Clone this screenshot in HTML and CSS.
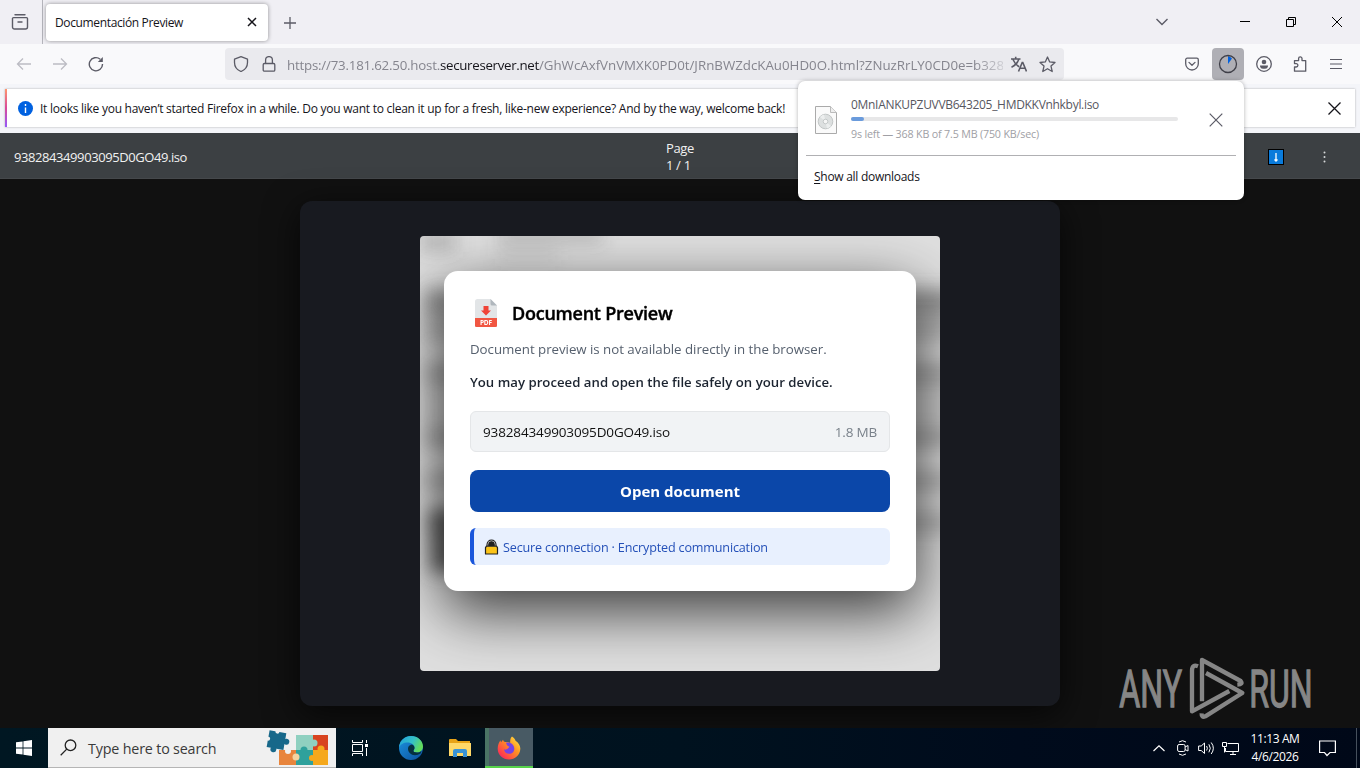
FILE: index.html
```html
<!DOCTYPE html>
<html lang="en">
  <head>
    <meta charset="utf-8">
    <title>Documentación Preview</title>
    <link rel="stylesheet" href="styles.css">
  </head>

  <body>
    <!-- tabs -->
    <div class="tabbar">
      <div class="recent">
        <svg width="18" height="18" viewBox="0 0 18 18" fill="none" stroke="#5b5b66" stroke-width="1.4"><path d="M4 1.8h10M2.5 4.6h13a1 1 0 0 1 1 1v8.4a2 2 0 0 1-2 2h-11a2 2 0 0 1-2-2V5.6a1 1 0 0 1 1-1zM7 9h4" stroke-linecap="round"/></svg>
      </div>
      <div class="tab">
        <span class="tab-title">Documentación Preview</span>
        <svg width="10" height="10" viewBox="0 0 10 10" stroke="#15141a" stroke-width="1.5"><path d="M1 1l8 8M9 1l-8 8"/></svg>
      </div>
      <svg class="plus" width="12" height="12" viewBox="0 0 12 12" stroke="#5b5b66" stroke-width="1.3"><path d="M6 0v12M0 6h12"/></svg>
      <div class="window-btns">
        <svg width="14" height="8" viewBox="0 0 14 8" fill="none" stroke="#5b5b66" stroke-width="1.4"><path d="M1.5 1l5.500 5.500L12.500 1"/></svg>
        <svg class="min" width="10" height="10" viewBox="0 0 10 10" stroke="#000"><path d="M0 4.5h10"/></svg>
        <svg class="max" width="10" height="10" viewBox="0 0 10 10" fill="none" stroke="#000"><path d="M.5 2.5h7v7h-7zM2.5 2.5v-2h7v7h-2"/></svg>
        <svg class="close" width="10" height="10" viewBox="0 0 10 10" stroke="#000"><path d="M0 0l10 10M10 0L0 10"/></svg>
      </div>
    </div>

    <!-- address bar -->
    <div class="navbar">
      <div class="nav-btns">
        <svg width="16" height="16" viewBox="0 0 16 16" fill="none" stroke="#bcbcc3" stroke-width="1.3"><path d="M15 8H1.5M7 2.5L1.5 8L7 13.500"/></svg>
        <svg width="16" height="16" viewBox="0 0 16 16" fill="none" stroke="#bcbcc3" stroke-width="1.3"><path d="M1 8h13.500M9 2.5L14.500 8L9 13.500"/></svg>
        <svg width="16" height="16" viewBox="0 0 16 16" fill="none" stroke="#5b5b66" stroke-width="1.4"><path d="M14.500 8A6.600 6.600 0 1 1 12.200 3.200"/><path d="M14.800 1v5h-5z" fill="#5b5b66" stroke="none"/></svg>
      </div>
      <div class="urlbar">
        <svg width="16" height="16" viewBox="0 0 16 16" fill="none" stroke="#5b5b66" stroke-width="1.3" stroke-linejoin="round"><path d="M8 .7l6.500 2.500v3.300c0 4-2.300 7.300-6.500 9-4.200-1.700-6.500-5-6.500-9V3.200z"/></svg>
        <svg class="lock" width="16" height="16" viewBox="0 0 16 16" fill="none" stroke="#5b5b66" stroke-width="1.3"><rect x="2.2" y="7.5" width="11.6" height="7.6" rx="1.2"/><path d="M4.600 7.500V4a3.400 3.400 0 0 1 6.800 0v3.500"/></svg>
        <div class="url"><span class="sub">https://73.181.62.50.host.</span><span class="domain">secureserver.net</span><span>/GhWcAxfVnVMXK0PD0t/JRnBWZdcKAu0HD0O.html?ZNuzRrLY0CD0e=b328</span></div>
        <svg width="16" height="16" viewBox="0 0 16 16" fill="none" stroke="#5b5b66" stroke-width="1.6"><path d="M0 3h9.500M4.700.8V3M2 3.500c1.300 3 3.300 5.600 6.200 7.300M7.800 3.200C6.700 6.500 4.200 9.500.5 11.200"/><path d="M7.500 15.500l3.700-9h.6l3.700 9M9 12.300h5"/></svg>
        <svg class="star" width="17" height="17" viewBox="0 0 17 17" fill="none" stroke="#5b5b66" stroke-width="1.3" stroke-linejoin="round"><path d="M8.500 1l2.200 4.900 5.300.6-4 3.600 1.200 5.400-4.700-2.800-4.700 2.800L5 10.100l-4-3.600 5.300-.6z"/></svg>
      </div>
      <div class="nav-right">
        <svg width="14" height="14" viewBox="0 0 14 14" fill="none" stroke="#5b5b66" stroke-width="1.3" stroke-linejoin="round" stroke-linecap="round"><path d="M2.200 1.200h9.600a1.500 1.500 0 0 1 1.500 1.500v4a6.300 6.300 0 0 1-12.600 0v-4a1.500 1.500 0 0 1 1.500-1.500zM4 5.400l3 2.900 3-2.900"/></svg>
        <div class="dl-btn">
          <svg width="20" height="20" viewBox="0 0 20 20"><path d="M10 10V2a8 8 0 0 1 4 2.500z" fill="#0061e0"/><circle cx="10" cy="10" r="8.500" fill="none" stroke="#3f3f48" stroke-width="1.3"/></svg>
        </div>
        <svg width="16" height="16" viewBox="0 0 16 16" fill="#5b5b66"><circle cx="8" cy="8" r="7.300" fill="none" stroke="#5b5b66" stroke-width="1.3"/><circle cx="8" cy="6" r="2.300"/><path d="M4 9.600h8v.6a3 3 0 0 1-3 2.600H7a3 3 0 0 1-3-2.600z"/></svg>
        <svg class="ext" width="16" height="16" viewBox="0 0 16 16" fill="none" stroke="#5b5b66" stroke-width="1.3" stroke-linejoin="round"><path d="M2.500 15.200h11.200V4.600H10V2.600a1.700 1.700 0 0 0-3.400 0v2H2.500v3h1.700a1.700 1.700 0 0 1 0 3.400H2.500z"/></svg>
        <svg width="12" height="12" viewBox="0 0 12 12" stroke="#5b5b66" stroke-width="1.2"><path d="M0 1.500h12M0 6h12M0 10.500h12"/></svg>
      </div>
    </div>

    <!-- notification -->
    <div class="notice-wrap">
      <div class="notice">
        <svg width="15" height="15" viewBox="0 0 15 15"><circle cx="7.500" cy="7.500" r="7.500" fill="#0061e0"/><path d="M7.500 3v2M7.500 6.500V12" stroke="#fff" stroke-width="1.4"/></svg>
        <span>It looks like you haven’t started Firefox in a while. Do you want to clean it up for a fresh, like-new experience? And by the way, welcome back!</span>
        <svg class="notice-x" width="13" height="13" viewBox="0 0 13 13" stroke="#15141a" stroke-width="1.3"><path d="M.5.5l12 12M12.500.5l-12 12"/></svg>
      </div>
    </div>

    <!-- page -->
    <div class="viewer-bar">
      <span class="viewer-name">938284349903095D0GO49.iso</span>
      <div class="viewer-page">Page<br>1 / 1</div>
      <div class="viewer-tools">
        <svg width="16" height="16" viewBox="0 0 16 16"><rect x=".5" y=".5" width="15" height="15" fill="#0a7bdb" stroke="#000"/><path d="M8 4v8M6.500 10.500L8 12l1.500-1.500" stroke="#fff" stroke-width="1.3" fill="none"/></svg>
        <svg width="3" height="12" viewBox="0 0 3 12" fill="#d6d8da"><circle cx="1.500" cy="1.500" r="1"/><circle cx="1.500" cy="6" r="1"/><circle cx="1.500" cy="10.500" r="1"/></svg>
      </div>
    </div>

    <div class="page">
      <div class="frame">
        <div class="preview">
          <svg class="scan" viewBox="0 0 520 435">
            <defs><filter id="soft" x="-20%" y="-20%" width="140%" height="140%"><feGaussianBlur stdDeviation="9"/></filter></defs>
            <rect width="520" height="435" fill="#dfdfdf"/>
            <g filter="url(#soft)" fill="#555">
              <rect x="0" y="-4" width="36" height="20" opacity=".3"/>
              <rect x="78" y="-8" width="105" height="14" opacity=".3"/>
              <rect x="78" y="12" width="60" height="12" opacity=".15"/>
              <rect x="5" y="53" width="530" height="22" opacity=".55"/>
              <rect x="5" y="72" width="530" height="34" opacity=".3"/>
              <rect x="5" y="126" width="530" height="22" opacity=".38"/>
              <rect x="5" y="148" width="530" height="44" opacity=".15"/>
              <rect x="5" y="192" width="530" height="20" opacity=".38"/>
              <rect x="5" y="234" width="530" height="22" opacity=".3"/>
              <rect x="5" y="275" width="530" height="22" opacity=".3"/>
              <rect x="10" y="272" width="90" height="64" opacity=".85"/>
            </g>
          </svg>
          <div class="modal">
            <div class="modal-head">
              <svg width="32" height="32" viewBox="0 0 32 32">
                <path d="M7.500 2h13l6.500 6.500V30h-22V4.500A2.500 2.500 0 0 1 7.500 2z" fill="#e2e5e7"/>
                <path d="M20.500 2L27 8.500h-5a1.500 1.500 0 0 1-1.500-1.500z" fill="#b0b7bd"/>
                <path d="M13.500 9h5v4.500H21L16 18.500l-5-5h2.500z" fill="#f04438"/>
                <path d="M5 21h22v7.500a1.500 1.500 0 0 1-1.500 1.500h-19A1.500 1.500 0 0 1 5 28.500z" fill="#f15642"/>
                <text x="10" y="28" class="pdf-label" textLength="12">PDF</text>
              </svg>
              <h2>Document Preview</h2>
            </div>
            <p class="msg">Document preview is not available directly in the browser.</p>
            <p class="msg-strong">You may proceed and open the file safely on your device.</p>
            <div class="file">
              <span class="file-name">938284349903095D0GO49.iso</span>
              <span class="file-size">1.8 MB</span>
            </div>
            <button class="open-btn">Open document</button>
            <div class="secure">
              <svg width="15" height="16" viewBox="0 0 15 16"><path d="M3.200 7V5.500a4.300 4.300 0 0 1 8.600 0V7" fill="#222" stroke="#222" stroke-width="1.5"/><path d="M3.800 7V5.500a3.700 3.700 0 0 1 7.400 0V7" fill="none" stroke="#c8c8c8" stroke-width=".8"/><path d="M2.500 7.200h10l1 1.500V15h-12V8.700z" fill="#fcc419" stroke="#222" stroke-width="1.2" stroke-linejoin="round"/></svg>
              <span>Secure connection · Encrypted communication</span>
            </div>
          </div>
        </div>
      </div>
    </div>

    <!-- downloads panel -->
    <div class="downloads">
      <div class="dl-item">
        <svg width="22" height="28" viewBox="0 0 22 28"><path d="M.5.5h15l6 6v21H.5z" fill="#fafafa" stroke="#aaa"/><path d="M15.500.5v6h6" fill="#eee" stroke="#bbb"/><circle cx="10.500" cy="15.500" r="7.300" fill="#dde0e0" stroke="#c2c6c6"/><path d="M10.500 15.500L5 11a7 7 0 0 1 4-2.500zM10.500 15.500l5.500 4.500a7 7 0 0 1-4 2.400z" fill="#eceeee"/><circle cx="10.500" cy="15.500" r="2.300" fill="#f6f6f6" stroke="#b5baba" stroke-width=".7"/></svg>
        <div class="dl-info">
          <div class="dl-name">0MnIANKUPZUVVB643205_HMDKKVnhkbyl.iso</div>
          <div class="bar"><div class="bar-fill" style="width: 4%"></div></div>
          <div class="dl-status">9s left — 368 KB of 7.5 MB (750 KB/sec)</div>
        </div>
        <svg class="dl-x" width="14" height="14" viewBox="0 0 14 14" stroke="#5b5b66" stroke-width="1.2"><path d="M.7.7l12.600 12.600M13.300.7L.7 13.300"/></svg>
      </div>
      <div class="dl-all"><u>S</u>how all downloads</div>
    </div>

    <!-- watermark -->
    <svg class="watermark" width="260" height="88" viewBox="0 0 780 264">
      <g class="wm-text">
        <text x="58" y="201" textLength="188" lengthAdjust="spacingAndGlyphs">ANY</text>
        <text x="448" y="201" textLength="190" lengthAdjust="spacingAndGlyphs">RUN</text>
      </g>
      <g fill="none" stroke="#868686" stroke-width="13" stroke-linejoin="round">
        <path d="M294 79Q276 72 276 92V214L388 153"/>
        <path d="M306 184V60L422 123Q430 133 412 134"/>
        <path d="M318 99L427 159L316 229Q304 234 305 220"/>
      </g>
    </svg>

    <!-- taskbar -->
    <div class="taskbar">
      <div class="start">
        <svg width="16" height="16" viewBox="0 0 16 16" fill="#fff"><path d="M0 2.300L6.600 1.400v6.200H0zM7.400 1.300L16 0v7.600H7.400zM0 8.400h6.600v6.200L0 13.700zM7.400 8.400H16V16l-8.600-1.300z"/></svg>
      </div>
      <div class="search">
        <svg width="17" height="17" viewBox="0 0 17 17" fill="none" stroke="#222" stroke-width="1.3"><circle cx="10.500" cy="6.300" r="5.300"/><path d="M6.700 10.100L.7 16.200"/></svg>
        <span>Type here to search</span>
        <svg class="puzzle" width="64" height="36" viewBox="0 0 64 36">
          <path d="M13 20h17v15H13z" fill="#e8853d"/>
          <path d="M30 5h17v15H30z" fill="#8fd0c0"/>
          <path d="M47 5h15v15H47z" fill="#d8431f"/>
          <path d="M30 20h17v15H30z" fill="#2fa19c"/>
          <path d="M47 20h15v15H47z" fill="#f5a81c"/>
          <circle cx="30" cy="27" r="3.500" fill="#f3d3a0"/><circle cx="38" cy="20" r="3.500" fill="#2fa19c"/><circle cx="48" cy="13" r="3.500" fill="#8fd0c0"/><circle cx="55" cy="19" r="3.500" fill="#f5a81c"/><circle cx="46" cy="28" r="3" fill="#f5a81c"/><circle cx="22" cy="21" r="3" fill="#f0f0f0"/>
          <g transform="rotate(10 10 10)"><path d="M2 1.500h17v17H2z" fill="#17688a"/><circle cx="20.500" cy="10" r="3" fill="#17688a"/><circle cx="9" cy="19.500" r="3" fill="#17688a"/><circle cx="10" cy="1.500" r="2" fill="#f0f0f0"/><circle cx="2" cy="10" r="2" fill="#f0f0f0"/></g>
        </svg>
      </div>
      <div class="task">
        <svg width="16" height="16" viewBox="0 0 16 16" fill="none" stroke="#fff"><path d="M.5 0v2.500h10V0M.5 16v-2.500h10V16M.5 4.500h10v7h-10zM14.500 0v3M14.500 8v8"/><path d="M13 4h3v3h-3z" fill="#fff" stroke="none"/></svg>
      </div>
      <div class="task">
        <svg width="24" height="24" viewBox="0 0 24 24">
          <defs>
            <linearGradient id="e1" x1="0" y1="0" x2="1" y2=".4"><stop offset="0" stop-color="#1fa0dc"/><stop offset=".6" stop-color="#35c1c7"/><stop offset="1" stop-color="#62dc5c"/></linearGradient>
            <linearGradient id="e2" x1="0" y1="0" x2="1" y2="1"><stop offset="0" stop-color="#1c93e0"/><stop offset="1" stop-color="#0c4f9c"/></linearGradient>
          </defs>
          <circle cx="12" cy="12" r="12" fill="url(#e2)"/>
          <path d="M0 11.500C.5 4.500 6 0 12 0c7 0 12 5 12 10.500 0 3.500-2.600 6-6 6-2.500 0-4-1-3.500-2 .8-1 1-1.700 1-2.700 0-3-3-5.300-7-5.300-4 0-7.300 2-8.500 5z" fill="url(#e1)"/>
          <path d="M14.500 14.500c-.5 1 1 2 3.500 2 1.800 0 3.200-.6 4.300-1.600l-.6 2.300C20 18.500 18 19.200 16 19.200c-4 0-7-3-7-6.400 0-2 1.300-3.700 3.500-4.300 2 .5 3 1.700 3 3.300 0 1-.2 1.700-1 2.700z" fill="#06303f"/>
        </svg>
      </div>
      <div class="task">
        <svg width="22" height="18" viewBox="0 0 22 18"><path d="M0 1a1 1 0 0 1 1-1h6l2 2h12v4H0z" fill="#e8a317"/><path d="M0 4h22v13H0z" fill="#ffd868"/><path d="M4 18v-6a2 2 0 0 1 2-2h10a2 2 0 0 1 2 2v6h-4v-4H8v4z" fill="#3a93d6"/></svg>
      </div>
      <div class="task active">
        <svg width="24" height="24" viewBox="0 0 24 24">
          <defs><linearGradient id="f1" x1="1" y1="0" x2="0" y2="1"><stop offset="0" stop-color="#fff04a"/><stop offset=".4" stop-color="#ff9422"/><stop offset=".8" stop-color="#ff3a4e"/><stop offset="1" stop-color="#e01c80"/></linearGradient></defs>
          <path d="M15 .5c2 1.200 3 2.700 3.500 4.300C21.500 6.500 23.500 10 23.300 13 23 19 18 23.500 12 23.500S.8 19 .7 13C.6 9.500 1.800 6.500 3.500 4.300c0 .8.200 1.500.6 2L6 3.800c.3 1.200 1 2 2.200 2.300 2-.2 4 .2 5 .8C13 4.500 13.300 2 15 .5z" fill="url(#f1)"/>
          <path d="M9 6.800c4-1 8.300 1.500 8.300 6 0 3-2.300 5-5 5-3.300 0-5.200-2-5.200-4.600 2 1.300 4-.5 5.400-2.400-1.700-.3-3-1.600-3.500-4z" fill="#7542e5"/>
        </svg>
      </div>
      <div class="tray">
        <svg width="12" height="7" viewBox="0 0 12 7" fill="none" stroke="#fff" stroke-width="1.2"><path d="M.5 6L6 .8 11.500 6"/></svg>
        <svg width="12" height="16" viewBox="0 0 12 16" fill="none" stroke="#fff"><rect x=".6" y="4.500" width="7.500" height="7" rx="1.5"/><path d="M8 7l3-1.500v5.500L8 9.500M2 2Q5.500-.6 9 2M2 14q3.500 2.600 7 0"/></svg>
        <svg width="17" height="14" viewBox="0 0 17 14" fill="none" stroke="#fff"><path d="M.6 5h2.600L6.500 2v10.500L3.200 9.500H.6zM8.600 5q1.500 2.200 0 4.500M10.900 3.300q2.800 3.900 0 8M13.200 1.500q4.300 5.700 0 11.500"/></svg>
        <svg width="17" height="15" viewBox="0 0 17 15" fill="none" stroke="#fff"><path d="M5.500 2.500h11v8h-13V7M8 13.500h6M11 10.500v3M.5 1.500h4v4h-4zM2.500 5.500v6"/></svg>
        <div class="clock">11:13 AM<br>4/6/2026</div>
        <svg class="notes" width="17" height="17" viewBox="0 0 17 17" fill="none" stroke="#fff" stroke-width="1.2"><path d="M.6 1h15.800v11.500h-5.400L8 15.500l-2.500-3H.6z"/></svg>
      </div>
    </div>
  </body>
</html>
```

FILE: styles.css
```css
* {
  box-sizing: border-box;
}

body {
  margin: 0;
  width: 1360px;
  height: 768px;
  overflow: hidden;
  display: flex;
  flex-direction: column;
  position: relative;
  font-family: "Open Sans", "Noto Sans", sans-serif;
  font-size: 12px;
  background: #111;
  color: #15141a;
}

svg {
  display: block;
  flex: none;
}

span,
.dl-name,
.dl-status {
  white-space: nowrap;
}

/* tabs */
.tabbar {
  height: 44px;
  display: flex;
  align-items: center;
  background: #f0eff4;
}

.recent {
  width: 43px;
  height: 44px;
  padding-left: 11px;
  display: flex;
  align-items: center;
  border-right: 1px solid #b4b4bb;
}

.tab {
  width: 222px;
  height: 37px;
  margin-left: 3px;
  padding: 0 11px 0 9px;
  display: flex;
  align-items: center;
  justify-content: space-between;
  background: #fff;
  border-radius: 4px;
  box-shadow: 0 0 4px rgba(0, 0, 0, 0.4);
}

.tab-title {
  letter-spacing: -0.36px;
}

.plus {
  margin: 1px 0 0 16px;
}

.window-btns {
  margin-left: auto;
  padding-right: 18px;
  display: flex;
  align-items: center;
}

.min {
  margin-left: 71px;
}

.max,
.close {
  margin-left: 36px;
}

/* address bar */
.navbar {
  height: 40px;
  display: flex;
  align-items: center;
  background: #f9f9fb;
}

.nav-btns {
  width: 225px;
  padding-left: 16px;
  display: flex;
  gap: 20px;
}

.urlbar {
  width: 839px;
  height: 32px;
  padding: 0 8px;
  display: flex;
  align-items: center;
  background: #eaeaee;
  border-radius: 4px;
}

.lock {
  margin-left: 12px;
}

.url {
  width: 718px;
  margin-top: 1px;
  margin-left: 10px;
  margin-right: 8px;
  overflow: hidden;
  white-space: nowrap;
  font-size: 13.3px;
  color: #85858e;
  -webkit-mask-image: linear-gradient(to right, #000 96%, rgba(0, 0, 0, 0.25));
  mask-image: linear-gradient(to right, #000 96%, rgba(0, 0, 0, 0.25));
}

.sub {
  letter-spacing: -0.21px;
}

.domain {
  letter-spacing: -0.31px;
  color: #15141a;
}

.star {
  margin-left: 12px;
}

.nav-right {
  margin-left: auto;
  padding-right: 18px;
  display: flex;
  align-items: center;
  gap: 23px;
}

.dl-btn {
  width: 32px;
  height: 32px;
  margin: 0 -11px 0 -10px;
  display: flex;
  align-items: center;
  justify-content: center;
  background: #afafb5;
  border-radius: 4px;
}

.ext {
  margin: 0 -1px 0 -3px;
}

/* notification */
.notice-wrap {
  height: 49px;
  padding: 5px 5px 6px 5px;
  background: #f4f5f9;
}

.notice {
  height: 38px;
  padding: 0 14px 0 11px;
  display: flex;
  align-items: center;
  background: #fff;
  border-left: 2px solid;
  border-image: linear-gradient(#ff9a6c, #d9499a, #9059ff) 1;
  box-shadow: 0 0 2px rgba(0, 0, 0, 0.3);
}

.notice span {
  margin-left: 7px;
  letter-spacing: -0.261px;
}

.notice-x {
  margin-left: auto;
}

/* page */
.viewer-bar {
  height: 46px;
  padding: 2px 34px 0 14px;
  display: grid;
  grid-template-columns: 1fr auto 1fr;
  align-items: center;
  background: #3c4043;
  color: #f1f1f1;
  font-size: 13px;
  border-bottom: 1px solid #45484b;
}

.viewer-name {
  letter-spacing: -0.42px;
}

.viewer-page {
  padding-left: 20px;
  line-height: 17px;
  letter-spacing: -0.3px;
}

.viewer-tools {
  display: flex;
  align-items: center;
  justify-content: flex-end;
  gap: 39px;
}

.page {
  height: 549px;
  padding-top: 22px;
  background: #111;
}

.frame {
  width: 760px;
  height: 505px;
  margin: 0 auto;
  padding-top: 35px;
  background: #181a20;
  border-radius: 12px;
  box-shadow: 0 8px 35px rgba(0, 0, 0, 0.7);
}

.preview {
  width: 520px;
  height: 435px;
  margin: 0 auto;
  padding: 35px 24px;
  position: relative;
  overflow: hidden;
  border-radius: 4px;
}

.scan {
  position: absolute;
  top: 0;
  left: 0;
  width: 520px;
  height: 435px;
}

.modal {
  position: relative;
  height: 320px;
  padding: 26px;
  background: #fff;
  border-radius: 14px;
  box-shadow: 0 20px 60px rgba(0, 0, 0, 0.75);
}

.modal-head {
  height: 32px;
  display: flex;
  align-items: center;
  gap: 10px;
}

.modal-head h2 {
  margin: -1px 0 0;
  font-size: 18px;
  font-weight: 600;
  letter-spacing: -0.24px;
  color: #000;
  -webkit-text-stroke: 0.4px #000;
}

.pdf-label {
  font-size: 6.5px;
  font-weight: 700;
  fill: #fff;
}

.msg {
  margin: 10px 0 0;
  font-size: 13.3px;
  line-height: 20px;
  letter-spacing: -0.03px;
  color: #56606e;
}

.msg-strong {
  margin: 13px 0 0;
  font-size: 13.2px;
  line-height: 20px;
  font-weight: 600;
  letter-spacing: 0.01px;
  color: #1c2430;
}

.file {
  height: 41px;
  margin-top: 19px;
  padding: 0 12px;
  display: flex;
  align-items: center;
  justify-content: space-between;
  font-size: 13.5px;
  background: #f1f3f5;
  border: 1px solid #e4e6e8;
  border-radius: 6px;
}

.file-name {
  color: #111;
  letter-spacing: -0.14px;
}

.file-size {
  color: #79818a;
  letter-spacing: -0.2px;
}

.open-btn {
  display: block;
  width: 420px;
  height: 42px;
  margin-top: 18px;
  padding: 0 0 1px;
  font-family: inherit;
  font-size: 15px;
  font-weight: 700;
  letter-spacing: -0.04px;
  color: #fff;
  background: #0b47a9;
  border: none;
  border-radius: 8px;
}

.secure {
  height: 37px;
  margin-top: 16px;
  padding: 1px 0 0 10px;
  display: flex;
  align-items: center;
  gap: 4px;
  font-size: 12.6px;
  letter-spacing: -0.17px;
  color: #2450b8;
  background: #e8f0fe;
  border-left: 4px solid #1a56db;
  border-radius: 6px;
}

/* downloads panel */
.downloads {
  position: absolute;
  top: 81px;
  left: 798px;
  width: 446px;
  height: 119px;
  padding: 0 8px;
  background: #fff;
  border-radius: 7px;
  box-shadow: 0 0 4px rgba(0, 0, 0, 0.3);
}

.dl-item {
  height: 75px;
  padding: 0 13px 0 9px;
  display: flex;
  align-items: center;
  border-bottom: 1px solid #b0b0b3;
}

.dl-item > svg {
  margin-top: 3px;
}

.dl-info {
  width: 327px;
  margin-left: 14px;
}

.dl-name {
  margin-top: 3px;
  line-height: 16px;
  letter-spacing: -0.3px;
  color: #57575f;
}

.bar {
  height: 4px;
  margin: 4px 0 5px;
  background: #e7e7e8;
  border-radius: 2px;
}

.bar-fill {
  height: 4px;
  background: #6a9bdc;
  border-radius: 2px;
}

.dl-status {
  line-height: 16px;
  font-size: 10.7px;
  letter-spacing: -0.17px;
  color: #a0a0a5;
}

.dl-item .dl-x {
  margin-left: auto;
}

.dl-all {
  padding: 13px 0 0 8px;
  line-height: 16px;
  letter-spacing: -0.28px;
}

.dl-all u {
  text-underline-offset: 2px;
}

/* watermark */
.watermark {
  position: absolute;
  left: 1100px;
  top: 640px;
}

.wm-text {
  font-family: Roboto, sans-serif;
  font-size: 153px;
  fill: #868686;
  stroke: #868686;
  stroke-width: 4px;
}

/* taskbar */
.taskbar {
  height: 40px;
  display: flex;
  background: linear-gradient(to right, #001722, #00121f 50%, #000b1c 75%, #000818);
}

.start {
  width: 48px;
  display: flex;
  align-items: center;
  justify-content: center;
}

.search {
  width: 288px;
  padding-left: 12px;
  display: flex;
  align-items: center;
  background: #f0f0f0;
  border-bottom: 1px solid #b5b5b5;
}

.search span {
  width: 178px;
  margin: 2px 0 0 11px;
  font-size: 14.3px;
  letter-spacing: -0.17px;
  color: #3a3a3a;
}

.task {
  width: 48px;
  margin-right: 3px;
  display: flex;
  align-items: center;
  justify-content: center;
}

.task + .task {
  margin-right: 1px;
}

.active {
  padding-top: 2px;
  background: linear-gradient(to right, #4a7465 4px, #485a64 4px);
  border-bottom: 2px solid #57d34b;
}

.tray {
  margin-left: auto;
  margin-right: 3px;
  padding-right: 20px;
  display: flex;
  align-items: center;
  gap: 8px;
  border-right: 1px solid #46505c;
}

.tray svg:first-child {
  margin-right: 4px;
}

.tray svg:nth-child(3) {
  margin: 0 -1px 0 1px;
}

.clock {
  width: 50px;
  margin-left: 3px;
  text-align: center;
  line-height: 18px;
  letter-spacing: -0.38px;
  color: #fff;
  white-space: nowrap;
}

.notes {
  margin-left: 11px;
}
```
